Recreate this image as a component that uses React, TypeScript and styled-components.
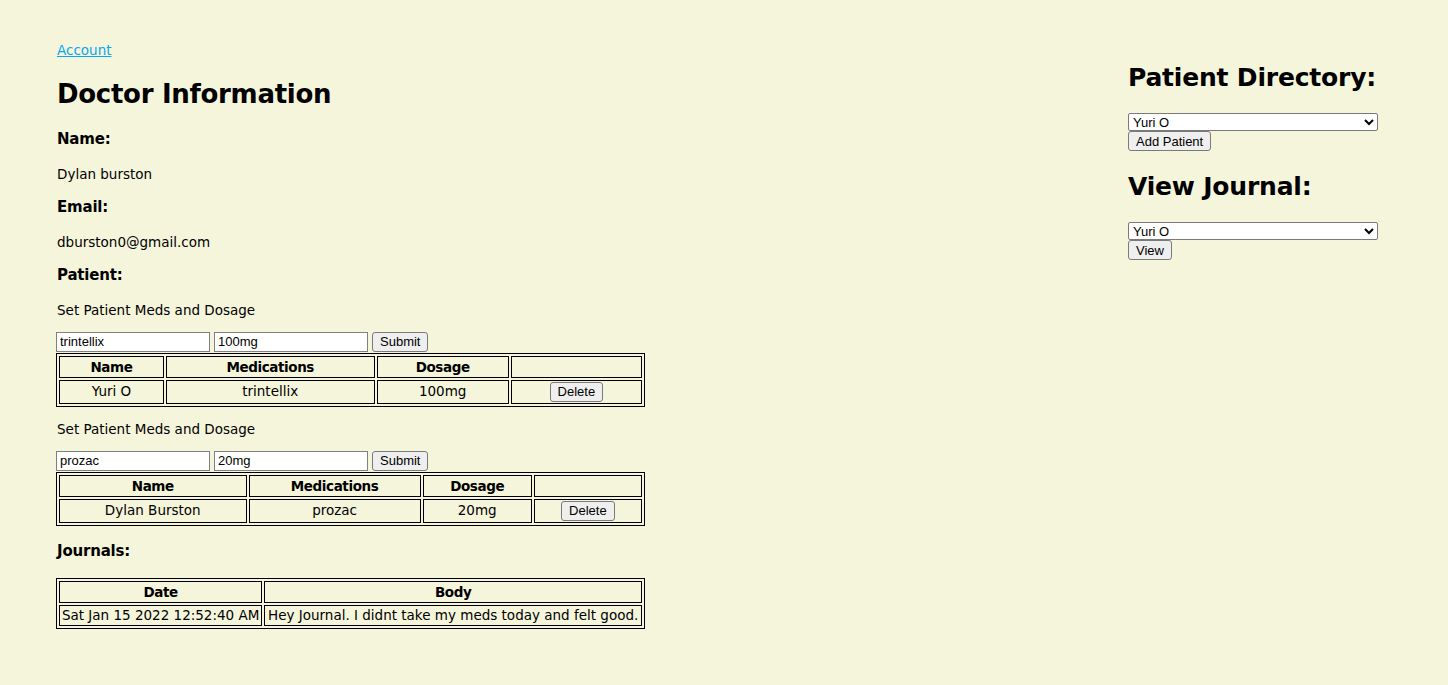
import React, { useState } from 'react'
import styled, { createGlobalStyle } from 'styled-components'

const GlobalStyle = createGlobalStyle`
  html, body {
    margin: 0;
    padding: 0;
    background: #f5f5dc;
  }
  body {
    font-family: "DejaVu Sans", "Noto Sans", sans-serif;
    font-size: 13.5px;
    color: #000;
  }
`

const Page = styled.div`
  display: flex;
  justify-content: space-between;
  align-items: flex-start;
  padding: 42px 70px 40px 56px;
  min-height: 100vh;
  box-sizing: border-box;
`

const LeftColumn = styled.div`
  width: 589px;
`

const RightColumn = styled.div`
  width: 250px;
`

const AccountLink = styled.a`
  display: block;
  line-height: 16px;
  color: #0aa6ef;
  text-decoration: underline;
  padding-left: 1px;
`

const Title = styled.h1`
  font-size: 26px;
  letter-spacing: -0.3px;
  line-height: 35px;
  margin: 18.5px 0;
  padding-left: 1px;
`

const Label = styled.h3`
  font-size: 15px;
  letter-spacing: -0.2px;
  line-height: 19px;
  margin: 16.5px 0;
  padding-left: 1px;
`

const Text = styled.p`
  line-height: 16px;
  margin: 14px 0;
  padding-left: 1px;
`

const SectionTitle = styled.h2`
  font-size: 25px;
  letter-spacing: -0.2px;
  line-height: 37px;
  margin: 17px 0;
`

const MedForm = styled.form`
  display: flex;
  align-items: center;
  gap: 4px;
  margin: 0 0 1px;
`

const TextInput = styled.input`
  box-sizing: border-box;
  width: 154px;
  height: 20px;
  padding: 1px 3px;
  border: 1px solid #808080;
  border-radius: 0;
  background: #fff;
  font-family: "Liberation Sans", Arial, sans-serif;
  font-size: 13px;
  color: #000;
`

const Button = styled.button`
  box-sizing: border-box;
  height: 20px;
  padding: 0 7px;
  border: 1px solid #7a7a7a;
  border-radius: 3px;
  background: #efefef;
  font-family: "Liberation Sans", Arial, sans-serif;
  font-size: 13px;
  color: #000;
`

const Select = styled.select`
  box-sizing: border-box;
  display: block;
  width: 250px;
  height: 18px;
  padding: 0;
  border: 1px solid #7a7a7a;
  border-radius: 2px;
  background: #fff;
  font-family: "Liberation Sans", Arial, sans-serif;
  font-size: 13px;
  color: #000;
`

const DataTable = styled.table<{ $full?: boolean }>`
  width: ${p => (p.$full ? '100%' : 'auto')};
  border: 1px solid #000;
  border-spacing: 2px;
  margin-bottom: 1px;
`

const Th = styled.th`
  border: 1px solid #000;
  padding: 1px;
  font-size: 13.5px;
  letter-spacing: -0.4px;
  font-weight: bold;
  line-height: 18px;
  text-align: center;
`

const Td = styled.td`
  border: 1px solid #000;
  padding: 1px;
  line-height: 17px;
  text-align: center;
  white-space: nowrap;
`

type Med = { name: string; medication: string; dosage: string }

const patients: Med[] = [
  { name: 'Yuri O', medication: 'trintellix', dosage: '100mg' },
  { name: 'Dylan Burston', medication: 'prozac', dosage: '20mg' },
]

function MedSection({ med }: { med: Med }) {
  const [drug, setDrug] = useState(med.medication)
  const [dose, setDose] = useState(med.dosage)
  return (
    <>
      <Text>Set Patient Meds and Dosage</Text>
      <MedForm onSubmit={e => e.preventDefault()}>
        <TextInput value={drug} onChange={e => setDrug(e.target.value)} />
        <TextInput value={dose} onChange={e => setDose(e.target.value)} />
        <Button type="submit">Submit</Button>
      </MedForm>
      <DataTable $full>
        <thead>
          <tr>
            <Th>Name</Th>
            <Th>Medications</Th>
            <Th>Dosage</Th>
            <Th></Th>
          </tr>
        </thead>
        <tbody>
          <tr>
            <Td>{med.name}</Td>
            <Td>{med.medication}</Td>
            <Td>{med.dosage}</Td>
            <Td>
              <Button type="button">Delete</Button>
            </Td>
          </tr>
        </tbody>
      </DataTable>
    </>
  )
}

export default function App() {
  return (
    <>
      <GlobalStyle />
      <Page>
        <LeftColumn>
          <AccountLink href="#">Account</AccountLink>
          <Title>Doctor Information</Title>
          <Label>Name:</Label>
          <Text>Dylan burston</Text>
          <Label>Email:</Label>
          <Text>dburston0@gmail.com</Text>
          <Label>Patient:</Label>
          {patients.map(p => (
            <MedSection key={p.name} med={p} />
          ))}
          <Label>Journals:</Label>
          <DataTable $full>
            <thead>
              <tr>
                <Th>Date</Th>
                <Th>Body</Th>
              </tr>
            </thead>
            <tbody>
              <tr>
                <Td>Sat Jan 15 2022 12:52:40 AM</Td>
                <Td>Hey Journal. I didnt take my meds today and felt good.</Td>
              </tr>
            </tbody>
          </DataTable>
        </LeftColumn>
        <RightColumn>
          <SectionTitle>Patient Directory:</SectionTitle>
          <Select defaultValue="Yuri O">
            <option>Yuri O</option>
            <option>Dylan Burston</option>
          </Select>
          <Button type="button">Add Patient</Button>
          <SectionTitle>View Journal:</SectionTitle>
          <Select defaultValue="Yuri O">
            <option>Yuri O</option>
            <option>Dylan Burston</option>
          </Select>
          <Button type="button">View</Button>
        </RightColumn>
      </Page>
    </>
  )
}
